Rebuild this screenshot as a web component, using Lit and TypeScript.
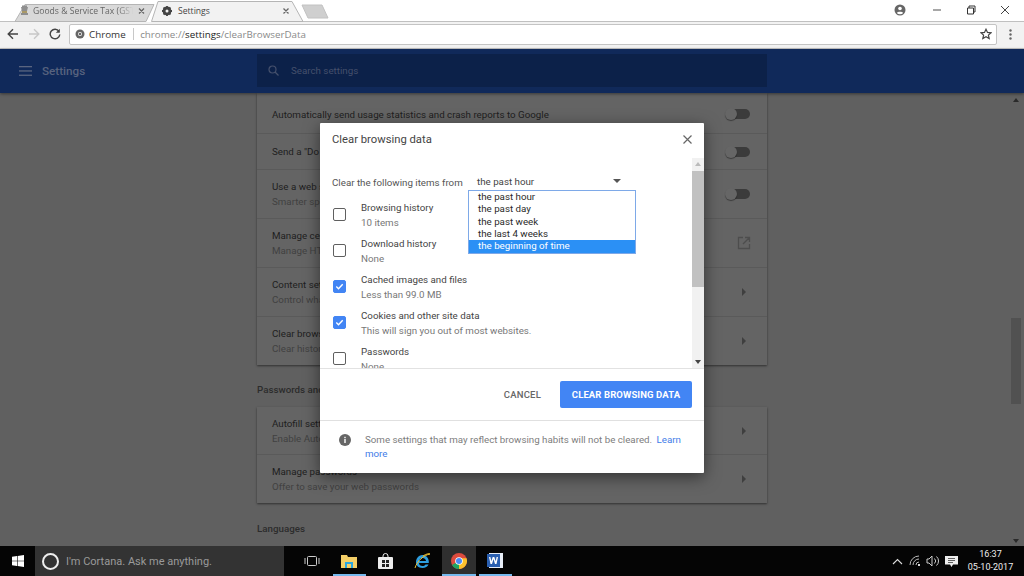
import { LitElement, html, css } from "lit";
import { customElement } from "lit/decorators.js";

const chevron = html`<svg class="chev" width="6" height="8" viewBox="0 0 6 8"><path d="M1 0l4 4-4 4z" fill="#3f3f3f"/></svg>`;
const toggle = html`<span class="toggle"><span class="knob"></span></span>`;
const ext = html`<svg class="ext" width="14" height="14" viewBox="0 0 14 14" fill="none" stroke="#4d4d4d" stroke-width="1.3"><path d="M6 1.500H1.500v11h11V8M8 1.500h4.500V6M12.300 1.700L6 8"/></svg>`;

const rows = [
  { h: 40, t: "Automatically send usage statistics and crash reports to Google", s: "", r: toggle },
  { h: 36, t: 'Send a "Do Not Track" request with your browsing traffic', s: "", r: toggle },
  { h: 49, t: "Use a web service to help resolve navigation errors", s: "Smarter spell check", r: toggle },
  { h: 49, t: "Manage certificates", s: "Manage HTTPS/SSL certificates and settings", r: ext },
  { h: 49, t: "Content settings", s: "Control what information websites can use", r: chevron },
  { h: 49, t: "Clear browsing data", s: "Clear history, cookies, cache and more", r: chevron },
];
const rows2 = [
  { h: 47, t: "Autofill settings", s: "Enable Autofill to fill out forms", r: chevron },
  { h: 49, t: "Manage passwords", s: "Offer to save your web passwords", r: chevron },
];

const items = [
  ["Browsing history", "10 items", false],
  ["Download history", "None", false],
  ["Cached images and files", "Less than 99.0 MB", true],
  ["Cookies and other site data", "This will sign you out of most websites.", true],
  ["Passwords", "None", false],
] as const;

@customElement("app-root")
export class AppRoot extends LitElement {
  static styles = css`
    :host { display: block; width: 1024px; height: 576px; position: relative; overflow: hidden;
      font-family: Roboto, "Liberation Sans", sans-serif; }
    .root { width: 1024px; height: 576px; display: flex; flex-direction: column; }
    .tabs { height: 22px; background: #fff; display: flex; align-items: center; flex: none; position: relative; padding-left: 33px; box-sizing: border-box; font-family: "Open Sans", sans-serif; font-size: 8.6px; }
    .tabstrip { width: 1024px; height: 22px; position: absolute; left: 0; top: 0; }
    .tt { position: relative; white-space: nowrap; flex: none; }
    .tt1 { width: 100px; color: #666; overflow: hidden; -webkit-mask-image: linear-gradient(90deg, #000 85%, transparent); mask-image: linear-gradient(90deg, #000 85%, transparent); }
    .tt2 { margin-left: 45px; color: #444; }
    .winctl { display: flex; align-items: center; height: 20px; position: absolute; right: 2px; top: 0; }
    .winctl span { display: flex; width: 34px; justify-content: center; align-items: center; height: 20px; }
    .winctl .prof { margin-right: 3px; }
    .toolbar { height: 27px; background: #f2f2f2; border-bottom: 1px solid #c6c6c6; box-sizing: border-box; display: flex; align-items: center; flex: none; padding-bottom: 2px; }
    .nav { width: 69px; display: flex; align-items: center; padding-left: 7px; gap: 9px; box-sizing: border-box; flex: none; }
    .omni { width: 928px; height: 21px; background: #fff; border: 1px solid #c4c4c4; border-radius: 2px; box-sizing: border-box; display: flex; align-items: center; font-family: "Open Sans", sans-serif; font-size: 9.8px; padding-left: 5px; flex: none; }
    .omni .chrome { color: #333; margin-left: 4px; }
    .omni .sep { width: 1px; height: 12px; background: #c8c8c8; margin: 0 6.500px 0 7px; }
    .omni .u { color: #8a8a8a; }
    .omni .u b { color: #222; font-weight: 400; }
    .omni .star { margin-left: auto; margin-right: 4px; display: flex; }
    .dots { flex: 1; display: flex; justify-content: center; }
    .page { flex: 1; background: #606060; position: relative; display: flex; flex-direction: column; min-height: 0; }
    .hdr { height: 44px; background: #10295a; flex: none; display: flex; align-items: center; box-shadow: 0 1px 3px rgba(0,0,0,.45); position: relative; z-index: 1; }
    .burger { margin-left: 19px; display: flex; }
    .hdr .ttl { color: #57627e; font-size: 11.7px; font-weight: 500; margin-left: 10px; width: 215px; padding-bottom: 1px; }
    .search { width: 510px; height: 33px; background: #0c2149; display: flex; align-items: center; color: #45506c; font-size: 9.75px; padding-left: 11px; box-sizing: border-box; gap: 12px; margin-top: -2px; }
    .content { flex: 1; padding-left: 257px; display: flex; flex-direction: column; overflow: hidden; position: relative; }
    .card { width: 510px; background: #646464; box-shadow: 0 1px 2px rgba(0,0,0,.5); flex: none; }
    .row { display: flex; align-items: center; padding: 0 15px; box-sizing: border-box; border-top: 1px solid #5a5a5a; }
    .row:first-child { border-top: 0; }
    .card:first-child .row:first-child { padding-top: 2px; }
    .row .txt { flex: 1; min-width: 0; }
    .row .t { font-size: 9.75px; color: #1e1e1e; line-height: 15px; white-space: nowrap; }
    .row .s { font-size: 9.75px; color: #414141; line-height: 15px; white-space: nowrap; }
    .r { width: 30px; display: flex; justify-content: flex-end; padding-right: 3px; align-items: center; flex: none; }
    .chev { margin-right: 2px; }
    .ext { margin-right: -2px; }
    .toggle { width: 22px; height: 10px; background: #3b3b3b; border-radius: 5px; position: relative; display: block; margin-right: -1px; }
    .knob { position: absolute; left: -3px; top: -1px; width: 12px; height: 12px; background: #666; border-radius: 50%; box-shadow: 0 1px 1px rgba(0,0,0,.4); }
    .sect { font-size: 9.75px; color: #2c2c2c; font-weight: 500; line-height: 15px; box-sizing: border-box; flex: none; }
    .sect1 { height: 42px; padding-top: 17px; }
    .sect2 { height: 43px; padding-top: 18px; }
    .sb { position: absolute; right: 0; top: 0; bottom: 0; width: 17px; }
    .sb .th { position: absolute; top: 225px; left: 4px; width: 10px; height: 86px; background: #515151; }
    .sb .a1 { position: absolute; top: 5px; left: 6px; }
    .sb .a2 { position: absolute; bottom: 3px; left: 6px; }
    .dialog { position: absolute; left: 320px; top: 123px; width: 384px; height: 350px; background: #fff; box-shadow: 0 4px 16px rgba(0,0,0,.5); display: flex; flex-direction: column; z-index: 5; border-radius: 1px; }
    .dh { height: 35px; box-sizing: border-box; display: flex; align-items: center; padding: 0 11px 3px 12px; color: #444; font-size: 11.25px; justify-content: space-between; flex: none; }
    .dbody { height: 210px; display: flex; flex: none; overflow: hidden; border-bottom: 1px solid #e2e2e2; position: relative; }
    .dscroll { flex: 1; padding: 0 12px; overflow: hidden; min-width: 0; }
    .from { height: 38.5px; box-sizing: border-box; padding-top: 16.5px; font-size: 9.75px; line-height: 15px; color: #555; white-space: nowrap; }
    .sel { position: absolute; left: 148px; top: 14px; width: 159px; height: 19px; border-bottom: 1px solid #4285f4; box-sizing: border-box; display: flex; justify-content: space-between; align-items: center; padding: 0 6px 0 9px; font-size: 9.75px; color: #444; }
    .sel i { width: 0; height: 0; border: 4px solid transparent; border-top: 4px solid #555; border-bottom: 0; }
    .it { display: flex; height: 36px; align-items: center; }
    .cb { width: 13px; height: 13px; border: 1.5px solid #5f5f5f; border-radius: 2px; margin-left: 1px; margin-right: 15px; flex: none; display: flex; box-sizing: border-box; }
    .cb.on { background: #4285f4; border-color: #4285f4; align-items: center; justify-content: center; }
    .it .a { font-size: 9.75px; color: #444; line-height: 15px; white-space: nowrap; }
    .it .b { font-size: 9.75px; color: #777; line-height: 15px; white-space: nowrap; }
    .dsb { width: 12px; background: #f1f1f1; flex: none; position: relative; }
    .dsb .th { position: absolute; left: 0; top: 13px; right: 0; height: 116px; background: #c1c1c1; }
    .dsb svg { position: absolute; left: 3px; }
    .dsb .up { top: 4px; }
    .dsb .dn { bottom: 4px; }
    .actions { height: 52px; display: flex; justify-content: flex-end; align-items: center; padding-right: 12px; gap: 18px; flex: none; border-bottom: 1px solid #e0e0e0; box-sizing: border-box; }
    .cancel { font-size: 9.5px; font-weight: 500; color: #666; letter-spacing: .2px; padding: 0 1px; }
    .clear { width: 132px; height: 27px; background: #4285f4; color: #fff; font-size: 9.5px; font-weight: 700; letter-spacing: .1px; display: flex; align-items: center; justify-content: center; border-radius: 2px; }
    .foot { flex: 1; display: flex; padding: 0 18px 0 19px; align-items: flex-start; gap: 14px; }
    .foot svg { margin-top: 13px; flex: none; }
    .foot p { margin: 12px 0 0; font-size: 9.75px; line-height: 14px; color: #7d7d7d; }
    .foot a { color: #3f7de8; padding-left: 2px; }
    .drop { position: absolute; left: 468px; top: 190px; width: 168px; height: 64px; box-sizing: border-box; background: #fff; border: 1px solid #7ea9e8; font-size: 9.75px; color: #2a2a2a; z-index: 6; display: flex; flex-direction: column; }
    .drop div { height: 12.25px; line-height: 12.25px; padding-left: 9px; flex: none; }
    .drop .sel2 { background: #2b90f5; color: #fff; flex: 1; }
    .task { height: 30px; background: #050505; flex: none; display: flex; align-items: stretch; color: #fff; position: relative; }
    .start { width: 35px; display: flex; align-items: center; justify-content: center; flex: none; }
    .cortana { width: 249px; background: #333; display: flex; align-items: center; gap: 7px; padding-left: 7px; box-sizing: border-box; font-size: 11px; color: #9a9a9a; flex: none; white-space: nowrap; }
    .cortana .ring { width: 13px; height: 13px; border: 2px solid #eee; border-radius: 50%; flex: none; }
    .ti { width: 36.5px; display: flex; align-items: center; justify-content: center; position: relative; flex: none; box-sizing: border-box; }
    .ti.tv { width: 47px; padding-left: 9px; }
    .ti.on::after { content: ""; position: absolute; left: 2px; right: 2px; bottom: 0; height: 2px; background: #76b9ed; }
    .ti.act { background: #2f2f2f; background-clip: content-box; padding: 0 1.5px; }
    .ti.act::after { left: 1.500px; right: 1.500px; }
    .tray { margin-left: auto; display: flex; align-items: center; }
    .tray .clock { width: 58px; text-align: center; font-size: 9px; line-height: 13.5px; color: #eee; margin-right: 4.500px; }
    .tr { display: flex; width: 17px; justify-content: center; }
    .tr.up { margin-right: 2px; }
    .tr.note { width: 20px; }
  `;

  render() {
    return html`<div class="root">
      <div class="tabs">
        <svg class="tabstrip" viewBox="0 0 1024 22">
          <path d="M0 21.500H15.500M298 21.500H1024" stroke="#c0c0c0" fill="none"/>
          <path d="M15 21.500L25 4.500h129l-8 17z" fill="#d9d9d9" stroke="#b5b5b5"/>
          <path d="M151.500 21.500L158 1.500h134l11 20z" fill="#f2f2f2" stroke="#b5b5b5"/>
          <path d="M302 5h20l6 13h-20z" fill="#cfcfcf" stroke="#c2c2c2"/>
          <path d="M21 7h7l-1 4h-5zM22 5.500h5v1.500h-5zM21 13h7v2h-7z" fill="#8f8f8f"/>
          <path d="M22 11h5v2h-5z" fill="#a96"/>
          <path d="M139 8.500l5 5M144 8.500l-5 5M283.500 8.500l5 5M288.500 8.500l-5 5" stroke="#666" stroke-width="1.300"/>
          <g transform="translate(167 11)">
            <circle r="3.200" fill="none" stroke="#444" stroke-width="2.400"/>
            <path d="M0-5V5M-5 0H5M-3.500-3.500L3.500 3.500M-3.500 3.500L3.500-3.500" stroke="#444" stroke-width="1.800"/>
            <circle r="1.500" fill="#f2f2f2"/>
          </g>
        </svg>
        <span class="tt tt1">Goods &amp; Service Tax (GST</span>
        <span class="tt tt2">Settings</span>
        <div class="winctl">
          <span class="prof"><svg width="12" height="12" viewBox="0 0 12 12"><circle cx="6" cy="6" r="5.500" fill="#666"/><circle cx="6" cy="4.500" r="1.800" fill="#fff"/><path d="M2.800 9c.8-1.600 5.600-1.600 6.400 0a4.500 4.500 0 0 1-6.400 0z" fill="#fff"/></svg></span>
          <span><svg width="10" height="2" viewBox="0 0 10 2"><path d="M1 1h8" stroke="#777" stroke-width="1.300"/></svg></span>
          <span><svg width="10" height="10" viewBox="0 0 10 10" fill="none" stroke="#333"><path d="M1.500 3h6v6h-6zM3 3V1h6v6H7.500"/></svg></span>
          <span><svg width="10" height="10" viewBox="0 0 10 10"><path d="M1 1l8 8M9 1l-8 8" stroke="#444"/></svg></span>
        </div>
      </div>
      <div class="toolbar">
        <div class="nav">
          <svg width="12" height="12" viewBox="0 0 12 12" fill="none" stroke="#444" stroke-width="1.400"><path d="M11 6H1.500M6 1.200L1.200 6 6 10.800"/></svg>
          <svg width="12" height="12" viewBox="0 0 12 12" fill="none" stroke="#c8c8c8" stroke-width="1.400"><path d="M1 6h9.500M6 1.200L10.800 6 6 10.800"/></svg>
          <svg width="12" height="12" viewBox="0 0 12 12" fill="none" stroke="#444" stroke-width="1.400"><path d="M10 3.300A4.800 4.800 0 1 0 10.800 6.500"/><path d="M10.800.8v4H6.800z" fill="#444" stroke="none"/></svg>
        </div>
        <div class="omni">
          <svg width="10" height="10" viewBox="0 0 10 10"><circle cx="5" cy="5" r="4.500" fill="#666"/><circle cx="5" cy="5" r="2" fill="#fff"/><circle cx="5" cy="5" r="1.300" fill="#666"/></svg>
          <span class="chrome">Chrome</span><span class="sep"></span>
          <span class="u">chrome://<b>settings</b>/clearBrowserData</span>
          <span class="star"><svg width="12" height="12" viewBox="0 0 12 12" fill="none" stroke="#444" stroke-width="1.200"><path d="M6 1.200l1.500 3.200 3.500.4-2.600 2.300.8 3.500L6 8.800 2.800 10.600l.8-3.500L1 4.800l3.500-.4z"/></svg></span>
        </div>
        <div class="dots"><svg width="3" height="11" viewBox="0 0 3 11" fill="#666"><circle cx="1.500" cy="1.500" r="1.200"/><circle cx="1.500" cy="5.500" r="1.200"/><circle cx="1.500" cy="9.500" r="1.200"/></svg></div>
      </div>
      <div class="page">
        <div class="hdr">
          <span class="burger"><svg width="13" height="10" viewBox="0 0 13 10" fill="#5a6580"><rect width="13" height="1.300"/><rect y="4.300" width="13" height="1.300"/><rect y="8.600" width="13" height="1.300"/></svg></span>
          <span class="ttl">Settings</span>
          <div class="search"><svg width="11" height="11" viewBox="0 0 11 11" fill="none" stroke="#45506c" stroke-width="1.200"><circle cx="4.500" cy="4.500" r="3.500"/><path d="M7 7l3.500 3.500"/></svg>Search settings</div>
        </div>
        <div class="content">
          <div class="card">${rows.map((r) => this.row(r))}</div>
          <div class="sect sect1">Passwords and forms</div>
          <div class="card">${rows2.map((r) => this.row(r))}</div>
          <div class="sect sect2">Languages</div>
          <div class="sb">
            <svg class="a1" width="6" height="4" viewBox="0 0 6 4"><path d="M3 0l3 4H0z" fill="#2a2a2a"/></svg>
            <div class="th"></div>
            <svg class="a2" width="6" height="4" viewBox="0 0 6 4"><path d="M3 4L0 0h6z" fill="#2a2a2a"/></svg>
          </div>
        </div>
      </div>
      <div class="task">
        <div class="start"><svg width="12" height="12" viewBox="0 0 12 12" fill="#fff"><path d="M0 1.700l5-.7v4.700H0zM5.600 .9L12 0v5.700H5.600zM0 6.300h5V11l-5-.7zM5.600 6.300H12V12l-6.400-.9z"/></svg></div>
        <div class="cortana"><span class="ring"></span>I'm Cortana. Ask me anything.</div>
        <div class="ti tv"><svg width="16" height="12" viewBox="0 0 16 12" fill="none" stroke="#ccc"><rect x="3.500" y="1.500" width="9" height="9" rx="1"/><path d="M1 3v6M15 3v6"/></svg></div>
        <div class="ti on"><svg width="16" height="14" viewBox="0 0 16 14"><path d="M0 1h6l1 2h9v11H0z" fill="#f4cf67"/><rect x="4" y="8" width="8" height="6" fill="#2aa6e0"/><rect x="6" y="10" width="4" height="4" fill="#f4cf67"/></svg></div>
        <div class="ti"><svg width="15" height="16" viewBox="0 0 15 16"><path d="M5 5V3a2.500 2.500 0 0 1 5 0v2" fill="none" stroke="#eee"/><rect x="0" y="4" width="15" height="12" rx="1" fill="#eee"/><rect x="4" y="7" width="3" height="3" fill="#222"/><rect x="8" y="7" width="3" height="3" fill="#222"/><rect x="4" y="11" width="3" height="3" fill="#222"/><rect x="8" y="11" width="3" height="3" fill="#222"/></svg></div>
        <div class="ti"><svg width="17" height="17" viewBox="0 0 17 17"><path d="M8.500 2C4 2 2 6 2 9s2 6 6.500 6c3 0 5-1.500 6-3.500h-3c-.8 1-1.800 1.500-3 1.500-2 0-3.500-1.300-3.500-3h9.800c.4-4-2-8-6.300-8zM5 8c.2-1.500 1.500-3 3.500-3S12 6.500 12 8z" fill="#2d9ee0"/><path d="M1 15C3 8 10 2 16 1c-1-.8-4 0-7 2" fill="none" stroke="#f2c230"/></svg></div>
        <div class="ti act on"><svg width="16" height="16" viewBox="0 0 16 16"><circle cx="8" cy="8" r="8" fill="#dd4b3e"/><path d="M8 8L1 12.100A8 8 0 0 0 8 16z" fill="#1da462"/><path d="M8 8v8a8 8 0 0 0 7.500-10.800H8z" fill="#fbc02d"/><circle cx="8" cy="8" r="3.800" fill="#fff"/><circle cx="8" cy="8" r="3" fill="#4a8af4"/></svg></div>
        <div class="ti on"><svg width="16" height="16" viewBox="0 0 16 16"><rect x="2" y="0" width="14" height="15" fill="#e8eef8"/><rect x="0" y="1" width="13" height="13" fill="#2a5fb0"/><path d="M2 4l1.500 7h1.500L6.500 6 8 11h1.500L11 4H9.600l-.9 4.300L7.300 4H5.700L4.300 8.300 3.400 4z" fill="#fff"/></svg></div>
        <div class="tray">
          <span class="tr up"><svg width="11" height="7" viewBox="0 0 11 7" fill="none" stroke="#ddd" stroke-width="1.100"><path d="M1 6l4.500-4.500L10 6"/></svg></span>
          <span class="tr"><svg width="14" height="12" viewBox="0 0 14 12" fill="none" stroke="#bbb"><path d="M1 10A9 9 0 0 1 10 1M4 10a6 6 0 0 1 6-6M7 10a3 3 0 0 1 3-3"/><rect x="9" y="9" width="2" height="2" fill="#ddd" stroke="none"/></svg></span>
          <span class="tr"><svg width="14" height="12" viewBox="0 0 14 12" fill="none" stroke="#ccc"><path d="M1 4h2l3-3v10L3 8H1zM8.500 3.500a3.500 3.500 0 0 1 0 5M10.500 1.500a6 6 0 0 1 0 9"/></svg></span>
          <span class="tr note"><svg width="13" height="13" viewBox="0 0 13 13"><path d="M0 1h13v8.500H8L6.500 12 5 9.500H0z" fill="#eee"/><path d="M3 3.500h7M3 5.500h7M3 7.500h5" stroke="#222" stroke-width=".7"/></svg></span>
          <div class="clock">16:37<br>05-10-2017</div>
        </div>
      </div>
    </div>
    <div class="dialog">
      <div class="dh"><span>Clear browsing data</span><svg width="11" height="11" viewBox="0 0 11 11"><path d="M1.500 1.500l8 8M9.500 1.500l-8 8" stroke="#666" stroke-width="1.200"/></svg></div>
      <div class="dbody">
        <div class="dscroll">
          <div class="from">Clear the following items from</div>
          <div>${items.map((i) => html`<div class="it"><span class="cb ${i[2] ? "on" : ""}">${i[2] ? html`<svg width="9" height="9" viewBox="0 0 9 9" fill="none" stroke="#fff" stroke-width="1.400"><path d="M1.300 4.600l2.200 2.200 4.200-4.600"/></svg>` : ""}</span><div><div class="a">${i[0]}</div><div class="b">${i[1]}</div></div></div>`)}</div>
        </div>
        <div class="sel"><span>the past hour</span><i></i></div>
        <div class="dsb">
          <div class="th"></div>
          <svg class="up" width="6" height="4" viewBox="0 0 6 4"><path d="M3 0l3 4H0z" fill="#bbb"/></svg>
          <svg class="dn" width="6" height="4" viewBox="0 0 6 4"><path d="M3 4L0 0h6z" fill="#444"/></svg>
        </div>
      </div>
      <div class="actions"><span class="cancel">CANCEL</span><span class="clear">CLEAR BROWSING DATA</span></div>
      <div class="foot">
        <svg width="12" height="12" viewBox="0 0 12 12"><circle cx="6" cy="6" r="6" fill="#666"/><rect x="5.300" y="5" width="1.400" height="4" fill="#fff"/><rect x="5.300" y="2.800" width="1.400" height="1.400" fill="#fff"/></svg>
        <p>Some settings that may reflect browsing habits will not be cleared. <a>Learn more</a></p>
      </div>
    </div>
    <div class="drop">
      <div>the past hour</div><div>the past day</div><div>the past week</div><div>the last 4 weeks</div><div class="sel2">the beginning of time</div>
    </div>`;
  }

  row(r: { h: number; t: string; s: string; r: unknown }) {
    return html`<div class="row" style="height:${r.h}px"><div class="txt"><div class="t">${r.t}</div>${r.s ? html`<div class="s">${r.s}</div>` : ""}</div><div class="r">${r.r}</div></div>`;
  }
}
